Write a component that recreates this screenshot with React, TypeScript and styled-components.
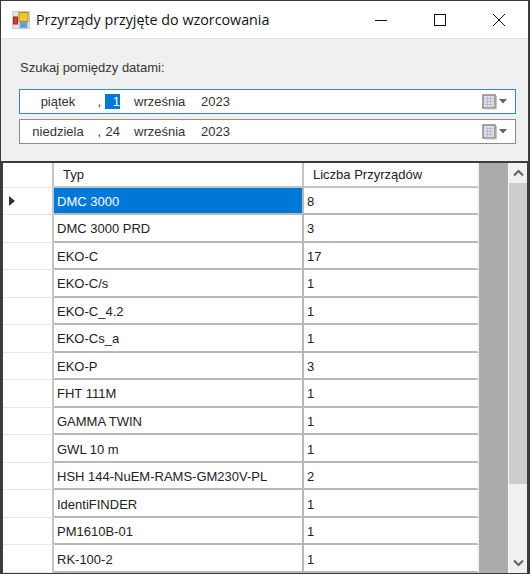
import React from "react";
import styled, { createGlobalStyle } from "styled-components";

const rows = [
  ["DMC 3000", "8"],
  ["DMC 3000 PRD", "3"],
  ["EKO-C", "17"],
  ["EKO-C/s", "1"],
  ["EKO-C_4.2", "1"],
  ["EKO-Cs_a", "1"],
  ["EKO-P", "3"],
  ["FHT 111M", "1"],
  ["GAMMA TWIN", "1"],
  ["GWL 10 m", "1"],
  ["HSH 144-NuEM-RAMS-GM230V-PL", "2"],
  ["IdentiFINDER", "1"],
  ["PM1610B-01", "1"],
  ["RK-100-2", "1"],
];

const GlobalStyle = createGlobalStyle`
  html, body { margin: 0; padding: 0; background: #fff; }
  * { box-sizing: border-box; }
`;

const Window = styled.div`
  width: 530px;
  height: 574px;
  display: flex;
  flex-direction: column;
  overflow: hidden;
  border: 1px solid #3a3a3a;
  border-right-width: 2px;
  font-family: "Liberation Sans", Arial, sans-serif;
  font-size: 13px;
  color: #1a1a1a;
  background: #f0f0f0;
`;

const TitleBar = styled.div`
  height: 38px;
  flex: none;
  display: flex;
  align-items: center;
  padding-left: 11px;
  background: #fff;
  border-bottom: 1px solid #e4e4e4;
`;

const TitleText = styled.span`
  margin-left: 6px;
  font-family: "Open Sans", "Noto Sans", sans-serif;
  font-size: 14.3px;
  color: #111;
  flex: 1;
`;

const CaptionButton = styled.button`
  width: 59px;
  height: 38px;
  padding: 0;
  border: 0;
  background: none;
  display: flex;
  align-items: center;
  justify-content: center;
`;

const FilterPanel = styled.div`
  height: 122px;
  flex: none;
  padding: 21px 12px 0 18px;
  display: flex;
  flex-direction: column;
`;

const FilterLabel = styled.div`
  color: #333;
  height: 29px;
  line-height: 15px;
  padding-left: 1px;
`;

const DateField = styled.div<{ $focused?: boolean }>`
  height: 25px;
  margin-bottom: 5px;
  background: #fff;
  border: 1px solid ${({ $focused }) => ($focused ? "#2b8ae0" : "#8c8c8c")};
  display: flex;
  align-items: center;
  padding-right: 7px;
  color: #333;
`;

const DatePart = styled.span<{ $width: number; $align?: string; $selected?: boolean }>`
  width: ${({ $width }) => $width}px;
  flex: none;
  text-align: ${({ $align }) => $align || "left"};
  line-height: 15px;
  ${({ $selected }) => $selected && "background: #0078d7; color: #fff;"}
`;

const Spacer = styled.span`
  flex: 1;
`;

const GridFrame = styled.div`
  flex: 1;
  min-height: 0;
  display: flex;
  border: 2px solid #3c3c3c;
  border-right-width: 1px;
  border-bottom: 0;
  background: #ababab;
`;

const GridBody = styled.div`
  width: 476px;
  flex: none;
  overflow: hidden;
`;

const Row = styled.div<{ $header?: boolean }>`
  display: grid;
  grid-template-columns: 51px 250px 175px;
  height: ${({ $header }) => ($header ? "24.5px" : "27.54px")};
`;

const RowHead = styled.div`
  background: #fff;
  border-right: 2px solid #c4c4c4;
  border-bottom: 1px solid #e6e6e6;
  display: flex;
  align-items: center;
  padding-left: 5px;
`;

const HeadCell = styled.div<{ $last?: boolean }>`
  background: #fff;
  border-right: 2px solid ${({ $last }) => ($last ? "#f4f4f4" : "#c4c4c4")};
  border-bottom: 2px solid #c4c4c4;
  padding-left: 9px;
  display: flex;
  align-items: center;
  color: #222;
`;

const Cell = styled.div<{ $selected?: boolean; $last?: boolean }>`
  background: ${({ $selected }) => ($selected ? "#0078d7" : "#fff")};
  color: ${({ $selected }) => ($selected ? "#fff" : "#222")};
  border-right: 2px solid ${({ $last }) => ($last ? "#f4f4f4" : "#b8b8b8")};
  border-bottom: 2px solid #b8b8b8;
  padding: 2px 0 0 3px;
  display: flex;
  align-items: center;
  white-space: nowrap;
`;

const ScrollBar = styled.div`
  width: 19px;
  margin-left: 29px;
  flex: none;
  display: flex;
  flex-direction: column;
  background: #f0f0f0;
  border-left: 1px solid #f7f7f7;
`;

const ScrollArrow = styled.div`
  height: 20px;
  flex: none;
  display: flex;
  align-items: center;
  justify-content: center;
`;

const ScrollTrack = styled.div`
  flex: 1;
  min-height: 0;
`;

const ScrollThumb = styled.div`
  height: 301px;
  background: #cdcdcd;
`;

const AppIcon = () => (
  <svg width="18" height="18" viewBox="0 0 18 18">
    <rect x="0.5" y="0.5" width="17" height="17" fill="#e4e4e4" stroke="#c9c9c9" />
    <rect x="7" y="1.5" width="9" height="9" fill="#f4c430" stroke="#b08a20" />
    <rect x="1.5" y="6" width="4" height="7" fill="#d33c33" stroke="#8f2a28" />
    <rect x="8" y="11.5" width="7" height="5" fill="#5b9bdf" stroke="#7fa8d4" />
  </svg>
);

const CalendarIcon = () => (
  <svg width="26" height="16" viewBox="0 0 26 16">
    <rect x="1" y="1" width="12" height="13" fill="#dde2ea" stroke="#8a8580" strokeWidth="1.5" />
    <path d="M3 4.5H11M3 7.5H11M3 10.5H11M5.5 3V12.5M8.5 3V12.5" stroke="#b4bdcb" fill="none" />
    <path d="M14.5 2V15H2" stroke="#c9c4be" fill="none" />
    <path d="M17 5H25L21 9.5Z" fill="#4d6185" />
  </svg>
);

const RowArrow = () => (
  <svg width="8" height="12" viewBox="0 0 8 12">
    <path d="M1 1L7 6L1 11Z" fill="#333" />
  </svg>
);

const Chevron = ({ down }: { down?: boolean }) => (
  <svg width="11" height="8" viewBox="0 0 11 8">
    <path d={down ? "M1 1.5L5.5 6L10 1.5" : "M1 6.5L5.5 2L10 6.5"} stroke="#606060" strokeWidth="2" fill="none" />
  </svg>
);

const DateRow = ({ parts, focused }: { parts: [string, string]; focused?: boolean }) => (
  <DateField $focused={focused}>
    <DatePart $width={10} />
    <DatePart $width={56} $align="center">{parts[0]}</DatePart>
    <DatePart $width={15} $align="right">,</DatePart>
    <DatePart $width={4} />
    <DatePart $width={15} $align="right" $selected={focused}>{parts[1]}</DatePart>
    <DatePart $width={14} />
    <DatePart $width={52}>września</DatePart>
    <DatePart $width={15} />
    <DatePart $width={32}>2023</DatePart>
    <Spacer />
    <CalendarIcon />
  </DateField>
);

export default function App() {
  return (
    <Window>
      <GlobalStyle />
      <TitleBar>
        <AppIcon />
        <TitleText>Przyrządy przyjęte do wzorcowania</TitleText>
        <CaptionButton>
          <svg width="12" height="12" viewBox="0 0 12 12">
            <path d="M0 6.5H12" stroke="#111" />
          </svg>
        </CaptionButton>
        <CaptionButton>
          <svg width="12" height="12" viewBox="0 0 12 12">
            <rect x="0.5" y="0.5" width="11" height="11" fill="none" stroke="#111" />
          </svg>
        </CaptionButton>
        <CaptionButton>
          <svg width="12" height="12" viewBox="0 0 12 12">
            <path d="M0 0L12 12M12 0L0 12" stroke="#111" />
          </svg>
        </CaptionButton>
      </TitleBar>
      <FilterPanel>
        <FilterLabel>Szukaj pomiędzy datami:</FilterLabel>
        <DateRow parts={["piątek", "1"]} focused />
        <DateRow parts={["niedziela", "24"]} />
      </FilterPanel>
      <GridFrame>
        <GridBody>
          <Row $header>
            <RowHead />
            <HeadCell>Typ</HeadCell>
            <HeadCell $last>Liczba Przyrządów</HeadCell>
          </Row>
          {rows.map(([name, count], i) => (
            <Row key={name}>
              <RowHead>{i === 0 && <RowArrow />}</RowHead>
              <Cell $selected={i === 0}>{name}</Cell>
              <Cell $last>{count}</Cell>
            </Row>
          ))}
        </GridBody>
        <ScrollBar>
          <ScrollArrow>
            <Chevron />
          </ScrollArrow>
          <ScrollTrack>
            <ScrollThumb />
          </ScrollTrack>
          <ScrollArrow>
            <Chevron down />
          </ScrollArrow>
        </ScrollBar>
      </GridFrame>
    </Window>
  );
}
